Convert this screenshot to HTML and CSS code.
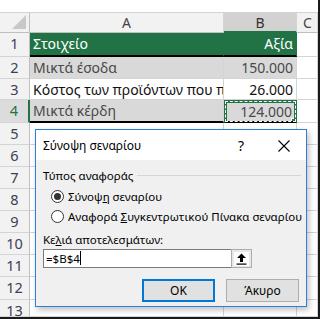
FILE: index.html
```html
<!DOCTYPE html>
<html lang="el">
<head>
  <meta charset="UTF-8" />
  <title>Σύνοψη σεναρίου</title>
  <link rel="stylesheet" href="styles.css">
</head>
<body>
  <div class="frame">
    <div class="top-strip"></div>

    <div class="sheet">
      <div class="row head">
        <div class="num corner"><span class="tri"></span></div>
        <div class="cell col-a">A</div>
        <div class="cell col-b sel">B</div>
        <div class="cell col-c">C</div>
      </div>

      <div class="row r1 thick">
        <div class="num">1</div>
        <div class="cell col-a green">Στοιχείο</div>
        <div class="cell col-b green right">Αξία</div>
        <div class="cell col-c"></div>
      </div>
      <div class="row r2">
        <div class="num">2</div>
        <div class="cell col-a grey">Μικτά έσοδα</div>
        <div class="cell col-b grey right">150.000</div>
        <div class="cell col-c"></div>
      </div>
      <div class="row r3">
        <div class="num">3</div>
        <div class="cell col-a clip">Κόστος των προϊόντων που πωλήθηκαν</div>
        <div class="cell col-b right">26.000</div>
        <div class="cell col-c"></div>
      </div>
      <div class="row r4 thick">
        <div class="num active">4</div>
        <div class="cell col-a grey">Μικτά κέρδη</div>
        <div class="cell col-b grey right ants">124.000<span class="handle"></span></div>
        <div class="cell col-c"></div>
      </div>
      <div class="row"><div class="num">5</div><div class="cell col-a"></div><div class="cell col-b"></div><div class="cell col-c"></div></div>
      <div class="row"><div class="num">6</div><div class="cell col-a"></div><div class="cell col-b"></div><div class="cell col-c"></div></div>
      <div class="row"><div class="num">7</div><div class="cell col-a"></div><div class="cell col-b"></div><div class="cell col-c"></div></div>
      <div class="row"><div class="num">8</div><div class="cell col-a"></div><div class="cell col-b"></div><div class="cell col-c"></div></div>
      <div class="row"><div class="num">9</div><div class="cell col-a"></div><div class="cell col-b"></div><div class="cell col-c"></div></div>
      <div class="row"><div class="num">10</div><div class="cell col-a"></div><div class="cell col-b"></div><div class="cell col-c"></div></div>
      <div class="row"><div class="num">11</div><div class="cell col-a"></div><div class="cell col-b"></div><div class="cell col-c"></div></div>
      <div class="row tall"><div class="num">12</div><div class="cell col-a"></div><div class="cell col-b"></div><div class="cell col-c"></div></div>
      <div class="row last"><div class="num">13</div><div class="cell col-a"></div><div class="cell col-b"></div><div class="cell col-c"></div></div>
    </div>

    <div class="dialog">
      <div class="title-bar">
        <span class="title">Σύνοψη σεναρίου</span>
        <span class="help">?</span>
        <svg class="close" width="12" height="12" viewBox="0 0 12 12">
          <path d="M0.5 0.5 L11.5 11.5 M11.5 0.5 L0.5 11.5" stroke="#000" stroke-width="1.1" fill="none"/>
        </svg>
      </div>
      <div class="body">
        <div class="group">
          <span>Τύπος αναφοράς</span>
          <span class="rule"></span>
        </div>
        <label class="radio">
          <span class="dot checked"></span>
          <span>Σύνοψ<u>η</u> σεναρίου</span>
        </label>
        <label class="radio">
          <span class="dot"></span>
          <span>Αναφορά <u>Σ</u>υγκεντρωτικού Πίνακα σεναρίου</span>
        </label>
        <div class="field-label">Κε<u>λ</u>ιά αποτελεσμάτων:</div>
        <div class="field">
          <div class="input">=$B$4<span class="caret"></span></div>
          <div class="ref-btn">
            <svg width="11" height="12" viewBox="0 0 11 12">
              <path d="M5.5 0.5 L10 5 L7 5 L7 9 L4 9 L4 5 L1 5 Z" fill="#000"/>
              <rect x="0.5" y="10.5" width="10" height="1.2" fill="#000"/>
            </svg>
          </div>
        </div>
        <div class="buttons">
          <button class="btn primary">OK</button>
          <button class="btn">Άκυρο</button>
        </div>
      </div>
    </div>
  </div>
</body>
</html>
```

FILE: styles.css
```css
body {
  margin: 0;
  background: #fff;
  font-family: 'Noto Sans', 'Open Sans', sans-serif;
}

.frame {
  position: relative;
  width: 318px;
  height: 317px;
  border-right: 2px solid #1a1a1a;
  border-bottom: 2px solid #1a1a1a;
  overflow: hidden;
}

.top-strip {
  height: 13px;
  background: #fff;
  border-bottom: 1px solid #d4d4d4;
  box-sizing: border-box;
}

.sheet {
  display: flex;
  flex-direction: column;
}

.row {
  display: flex;
  height: 22px;
  box-sizing: border-box;
}

.row.head { height: 20px; }
.row.r1 { height: 24px; }
.row.r2 { height: 22px; }
.row.r3 { height: 21px; }
.row.r4 { height: 23px; }
.row.tall { height: 23px; }
.row.last { height: 17px; }

.num {
  width: 30px;
  flex: none;
  box-sizing: border-box;
  background: #f2f2f2;
  border-right: 1px solid #bfbfbf;
  border-bottom: 1px solid #d4d4d4;
  color: #3a4054;
  font-size: 14.5px;
  line-height: 21px;
  text-align: center;
}

.num.active {
  background: #dcdcdc;
  border-right: 2px solid #217346;
  color: #217346;
}

.corner {
  position: relative;
  border-bottom: 1px solid #bfbfbf;
}

.tri {
  position: absolute;
  right: 3px;
  bottom: 3px;
  width: 0;
  height: 0;
  border-left: 14px solid transparent;
  border-bottom: 14px solid #c8c8c8;
}

.cell {
  box-sizing: border-box;
  border-right: 1px solid #d4d4d4;
  border-bottom: 1px solid #d4d4d4;
  font-size: 14px;
  line-height: 21px;
  padding: 0 3px;
  white-space: nowrap;
  overflow: hidden;
  color: #111;
}

.col-a { width: 194px; flex: none; }
.col-b { width: 73px; flex: none; }
.col-c { flex: 1; }

.head .cell {
  background: #f2f2f2;
  border-bottom: 1px solid #bfbfbf;
  border-right: 1px solid #d4d4d4;
  text-align: center;
  color: #444;
  line-height: 19px;
}

.head .col-c { text-align: left; padding-left: 6px; }

.head .sel {
  background: #d2d2d2;
  border-bottom: 2px solid #217346;
  color: #333;
}

.right { text-align: right; }

.green {
  background: #217346;
  color: #fff;
  border-right-color: #217346;
  border-bottom-color: #217346;
}

.grey {
  background: #d9d9d9;
  color: #4a4a4a;
}

.thick .col-a,
.thick .col-b {
  border-bottom: 2px solid #000;
}

.clip { text-overflow: clip; }

.ants {
  position: relative;
  line-height: 17px;
  border: 3px solid #217346;
  outline: 1px dashed #fff;
  outline-offset: -2px;
  padding-right: 2px;
}

.handle {
  position: absolute;
  right: -5px;
  bottom: -5px;
  width: 6px;
  height: 6px;
  background: #217346;
  border: 1px solid #fff;
}

.dialog {
  position: absolute;
  left: 35px;
  top: 129px;
  width: 272px;
  height: 178px;
  box-sizing: border-box;
  border: 1px solid #2b7fd4;
  background: #f0f0f0;
  box-shadow: 2px 3px 6px rgba(0, 0, 0, 0.25);
  font-size: 11.5px;
  color: #000;
}

.title-bar {
  display: flex;
  align-items: center;
  height: 30px;
  background: #fff;
  padding-left: 7px;
  padding-right: 16px;
}

.title { flex: 1; font-size: 12px; }

.help {
  font-size: 14px;
  margin-right: 34px;
}

.close { margin-top: 1px; }

.body {
  padding: 7px 5px 0 7px;
}

.group {
  display: flex;
  align-items: center;
  gap: 4px;
  height: 16px;
}

.rule {
  flex: 1;
  height: 1px;
  background: #d5d5d5;
}

.radio {
  display: flex;
  align-items: center;
  gap: 4px;
  height: 20px;
  padding-left: 8px;
  white-space: nowrap;
}

.radio:first-of-type { margin-top: 3px; }

.dot {
  position: relative;
  flex: none;
  width: 13px;
  height: 13px;
  box-sizing: border-box;
  border: 1px solid #333;
  border-radius: 50%;
  background: #fff;
}

.dot.checked::after {
  content: "";
  position: absolute;
  left: 2px;
  top: 2px;
  width: 7px;
  height: 7px;
  border-radius: 50%;
  background: #333;
}

.field-label {
  margin-top: 5px;
  height: 17px;
  line-height: 17px;
}

.field {
  display: flex;
  margin-top: 1px;
  width: 209px;
}

.input {
  flex: 1;
  height: 19px;
  box-sizing: border-box;
  background: #fff;
  border: 1px solid #7a7a7a;
  border-right: none;
  padding-left: 2px;
  line-height: 17px;
}

.caret {
  display: inline-block;
  width: 1px;
  height: 14px;
  background: #000;
  vertical-align: -2px;
}

.ref-btn {
  width: 21px;
  height: 19px;
  box-sizing: border-box;
  border: 1px solid #adadad;
  background: #e8e8e8;
  display: flex;
  align-items: center;
  justify-content: center;
}

.ref-btn svg {
  background: #fff;
  padding: 1px 2px;
}

.buttons {
  display: flex;
  justify-content: flex-end;
  gap: 11px;
  margin-top: 11px;
  padding-right: 2px;
}

.btn {
  width: 73px;
  height: 23px;
  box-sizing: border-box;
  border: 1px solid #adadad;
  background: #e1e1e1;
  font-family: inherit;
  font-size: 12px;
  color: #000;
  padding: 0;
}

.btn.primary {
  border: 2px solid #0078d7;
}
```
